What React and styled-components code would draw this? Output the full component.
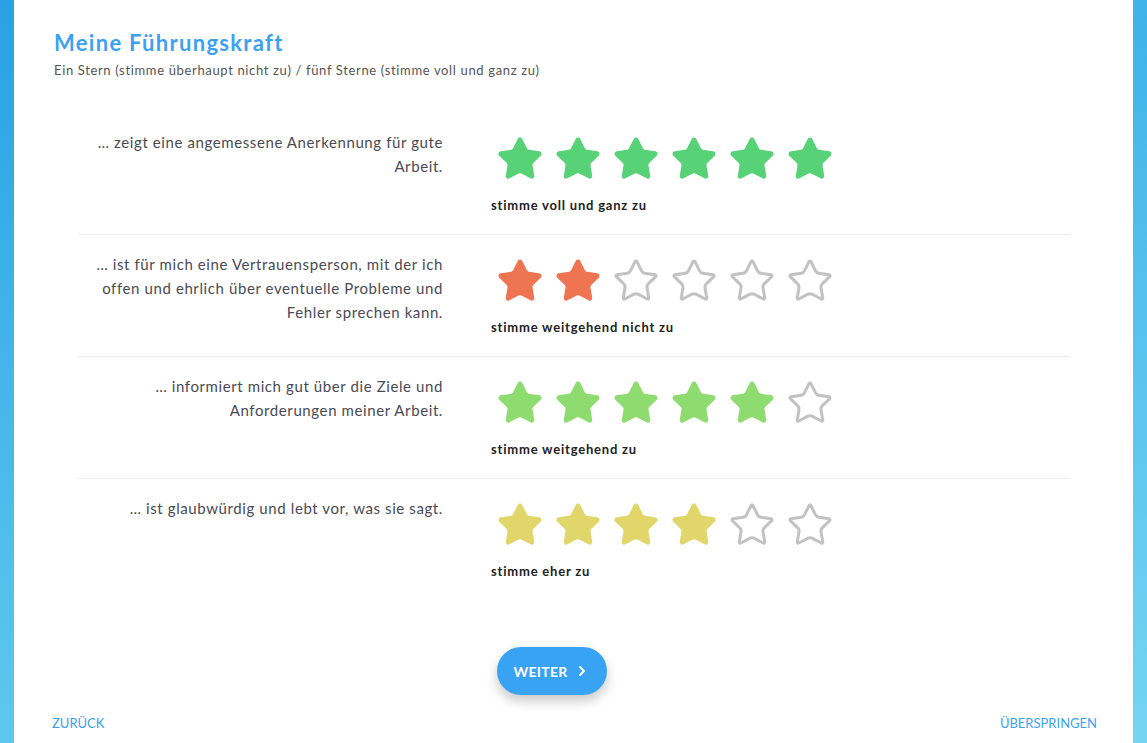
import React from 'react';
import styled, { createGlobalStyle } from 'styled-components';
import { Star, ChevronRight } from 'lucide-react';

const GlobalStyle = createGlobalStyle`
  html, body {
    margin: 0;
    padding: 0;
  }
  body {
    font-family: Lato, "Noto Sans", sans-serif;
    background: linear-gradient(165deg, #28a2e4 0%, #4fbdec 50%, #74d5f2 100%);
    min-height: 100vh;
  }
`;

const Page = styled.div`
  margin: 0 14px;
  min-height: 100vh;
  background: #fff;
  padding: 28px 40px 10px;
  box-sizing: border-box;
  display: flex;
  flex-direction: column;
`;

const Title = styled.h1`
  margin: 0;
  font-size: 22px;
  line-height: 30px;
  font-weight: 700;
  letter-spacing: 1.3px;
  color: #3ca2f0;
`;

const Subtitle = styled.p`
  margin: 3px 0 0;
  font-size: 13px;
  line-height: 18px;
  letter-spacing: 0.65px;
  color: #555;
`;

const Questions = styled.div`
  margin: 34px 23px 0 24px;
`;

const Row = styled.div`
  display: grid;
  grid-template-columns: 365px 1fr;
  column-gap: 48px;
  padding: 17px 0 20px;
  border-bottom: 1px solid #ebebeb;
  &:last-child {
    border-bottom: none;
  }
`;

const Question = styled.div`
  text-align: right;
  font-size: 15px;
  line-height: 24px;
  letter-spacing: 0.6px;
  color: #4a4a55;
`;

const Answer = styled.div`
  padding-top: 5px;
`;

const Stars = styled.div`
  display: flex;
  gap: 10px;
  margin-left: 5px;
  height: 48px;
`;

const Label = styled.div`
  margin-top: 13px;
  font-size: 13px;
  line-height: 18px;
  font-weight: 700;
  letter-spacing: 0.8px;
  color: #222;
`;

const Actions = styled.div`
  display: flex;
  justify-content: center;
  margin-top: 47px;
  padding-right: 44px;
`;

const NextButton = styled.button`
  height: 48px;
  width: 110px;
  border: none;
  border-radius: 24px;
  background: #38a2f3;
  color: #fff;
  font-family: Lato, "Noto Sans", sans-serif;
  font-size: 14px;
  font-weight: 700;
  letter-spacing: 0.3px;
  display: flex;
  align-items: center;
  justify-content: center;
  gap: 6px;
  box-shadow: 0 6px 12px rgba(0, 0, 0, 0.22);
  cursor: pointer;
`;

const Footer = styled.div`
  display: flex;
  justify-content: space-between;
  margin-top: 19px;
  margin-right: -4px;
  margin-left: -2px;
`;

const FooterLink = styled.a`
  font-size: 13px;
  line-height: 18px;
  color: #3ca2f0;
  text-decoration: none;
  cursor: pointer;
`;

const colors = {
  6: '#57d277',
  5: '#8edc6f',
  4: '#e1d66a',
  2: '#ef7452',
};

const items = [
  { q: '… zeigt eine angemessene Anerkennung für gute Arbeit.', value: 6, label: 'stimme voll und ganz zu' },
  { q: '… ist für mich eine Vertrauensperson, mit der ich offen und ehrlich über eventuelle Probleme und Fehler sprechen kann.', value: 2, label: 'stimme weitgehend nicht zu' },
  { q: '… informiert mich gut über die Ziele und Anforderungen meiner Arbeit.', value: 5, label: 'stimme weitgehend zu' },
  { q: '… ist glaubwürdig und lebt vor, was sie sagt.', value: 4, label: 'stimme eher zu' },
];

const Rating = ({ value }) => {
  const c = colors[value];
  return (
    <Stars>
      {[1, 2, 3, 4, 5, 6].map((i) => (
        <Star
          key={i}
          size={48}
          strokeWidth={1.5}
          color={i <= value ? c : '#c2c2c2'}
          fill={i <= value ? c : 'none'}
        />
      ))}
    </Stars>
  );
};

const App = () => {
  return (
    <>
      <GlobalStyle />
      <Page>
        <Title>Meine Führungskraft</Title>
        <Subtitle>Ein Stern (stimme überhaupt nicht zu) / fünf Sterne (stimme voll und ganz zu)</Subtitle>
        <Questions>
          {items.map((it) => (
            <Row key={it.q}>
              <Question>{it.q}</Question>
              <Answer>
                <Rating value={it.value} />
                <Label>{it.label}</Label>
              </Answer>
            </Row>
          ))}
        </Questions>
        <Actions>
          <NextButton>
            WEITER
            <ChevronRight size={16} strokeWidth={3} />
          </NextButton>
        </Actions>
        <Footer>
          <FooterLink>ZURÜCK</FooterLink>
          <FooterLink>ÜBERSPRINGEN</FooterLink>
        </Footer>
      </Page>
    </>
  );
};

export default App;
